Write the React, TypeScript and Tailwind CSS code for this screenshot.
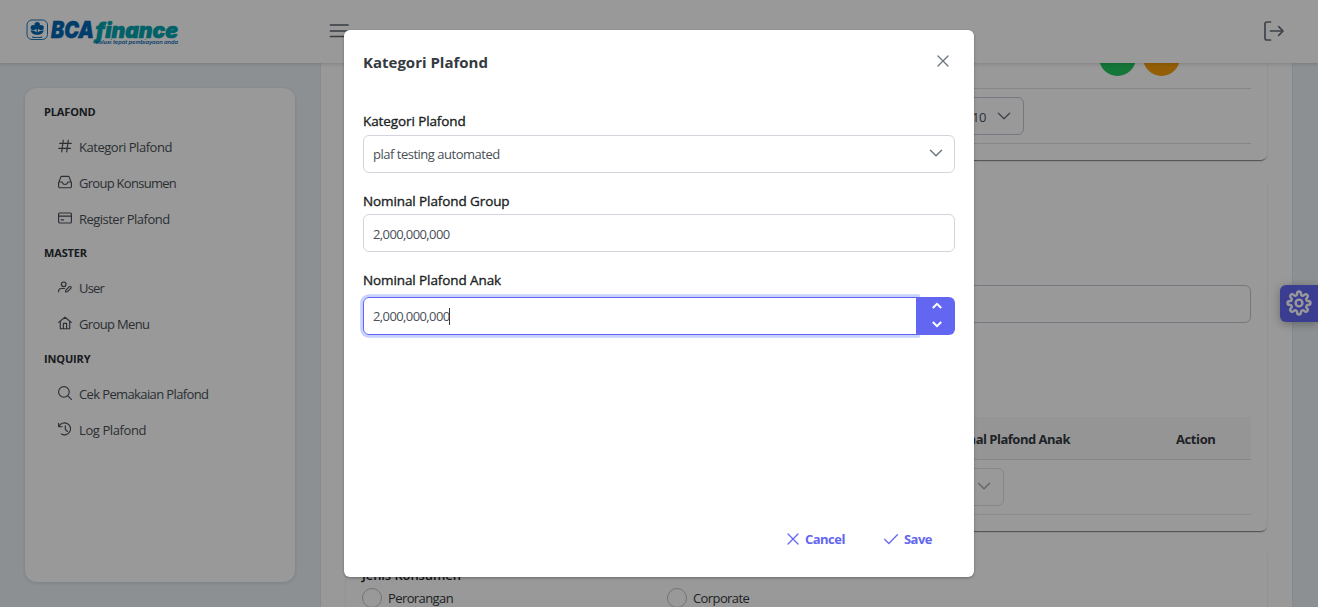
import React from "react";

type Kids = { children: React.ReactNode };

function Icon({ children, className = "size-3.5" }: Kids & { className?: string }) {
  return (
    <svg viewBox="0 0 14 14" fill="none" stroke="currentColor" strokeWidth="1.15" strokeLinecap="round" strokeLinejoin="round" className={`shrink-0 ${className}`}>
      {children}
    </svg>
  );
}

const hashtag = <path d="M5.3 1.2 3.7 12.8M10.3 1.2 8.7 12.8M1.7 4.3h11.6M.8 9.4h11.6" />;
const inbox = <path d="M.6 7.6 2.8 2.1Q3.1 1.4 3.9 1.4h6.2q.8 0 1.1.7l2.2 5.5v4.2q0 .9-.9.9H1.5q-.9 0-.9-.9ZM.8 7h2.9q.6 0 .7.6.5 1.9 2.6 1.9t2.6-1.9q.1-.6.7-.6h2.9" />;
const card = (
  <>
    <rect x=".6" y="2" width="12.8" height="10" rx="1" />
    <path d="M.6 5.2h12.8M3.2 8.8h2.3" strokeWidth="1.3" />
  </>
);
const userEdit = <path d="M5.700 6.600a2.300 2.300 0 1 0 0-4.600 2.300 2.300 0 0 0 0 4.600ZM.6 11.800V11q.2-2.500 2.700-2.500h3.200M7.600 11.900l.2-1.800 3.600-3.500q.6-.5 1.200 0l.4.4q.5.6 0 1.200l-3.600 3.500Z" />;
const home = <path d="M.7 6.4 7 1.2l6.3 5.2M2.3 5.3v7.4h9.400V5.3M5.4 12.7V7.4h3.2v5.3" />;
const search = <path d="M5.9 11.2A5.3 5.3 0 1 0 5.9.6a5.3 5.3 0 0 0 0 10.6ZM9.8 9.8l3.6 3.6" />;
const history = <path d="M.6 1.2v3.5h3.5M1 4.4A6 6 0 1 1 3.4 12M7.3 3.8v3.5l2.2 2.2" />;
const down = <path d="m1.4 4.2 5.6 5.6 5.6-5.6" />;

function Section({ title, children, className }: Kids & { title: string; className: string }) {
  return (
    <section>
      <h2 className={`pl-[19px] text-[11px] leading-[16px] font-bold tracking-[-0.15px] text-[#2a2d33] ${className}`}>{title}</h2>
      <ul>{children}</ul>
    </section>
  );
}

function Item({ icon, children, className }: Kids & { icon: React.ReactNode; className: string }) {
  return (
    <li className="flex h-9 items-center pl-[33px] text-[#495057]">
      <Icon className="mb-[3px] size-3.5">{icon}</Icon>
      <span className={`ml-[7px] pt-[2px] text-[13px] ${className}`}>{children}</span>
    </li>
  );
}

function Logo() {
  return (
    <svg width="156" height="32" viewBox="0 0 156 32" className="shrink-0 overflow-visible">
      <rect x="2" y="4" width="20.500" height="19.500" rx="5" fill="none" stroke="#0066b3" strokeWidth=".9" />
      <g fill="#0066b3">
        <circle cx="12.200" cy="8.600" r="2.700" />
        <circle cx="8.300" cy="11.600" r="2.700" />
        <circle cx="16.100" cy="11.600" r="2.700" />
        <circle cx="12.200" cy="11.600" r="2" />
        <path d="M11.600 10h1.200v6.200q2.300-2.200 6-1.700-1.200 3.700-5 4.300h-3.200q-3.800-.6-5-4.300 3.700-.5 6 1.700Z" />
        <path d="M7 20.600q5.200 1.200 10.400 0v.8q-5.200 1.200-10.400 0Z" />
      </g>
      <g fontFamily="Inter, sans-serif" fontStyle="italic" fontWeight="900">
        <text x="26" y="22" fontSize="22.500" fill="#0066b3" stroke="#0066b3" strokeWidth=".5" textLength="43" lengthAdjust="spacingAndGlyphs">BCA</text>
        <text x="70.500" y="22" fontSize="21" fill="#00a3ad" stroke="#00a3ad" strokeWidth=".7" textLength="82.500" lengthAdjust="spacingAndGlyphs">finance</text>
        <text x="70.500" y="28.400" fontSize="5.200" fontWeight="600" fill="#0066b3" textLength="82.500" lengthAdjust="spacingAndGlyphs">solusi tepat pembiayaan anda</text>
      </g>
    </svg>
  );
}

function Panel({ children, className }: Kids & { className: string }) {
  return <div className={`mx-[25px] shrink-0 rounded-md px-4 shadow-[0_2px_1px_-1px_rgba(0,0,0,0.4),0_1px_2px_rgba(0,0,0,0.14)] ${className}`}>{children}</div>;
}

function Radio({ label, className }: { label: string; className: string }) {
  return (
    <label className="flex w-[305px] items-center">
      <span className="size-5 rounded-full border border-[#bcc0c6]" />
      <span className={`ml-1.5 text-[13px] leading-5 text-[#343a40] ${className}`}>{label}</span>
    </label>
  );
}

function Page() {
  return (
    <div className="flex h-full flex-col bg-[#ebf1f6]">
      <header className="relative flex h-[63px] shrink-0 items-center bg-white pr-[33px] pl-[25px] shadow-[0_1px_4px_rgba(0,0,0,0.16)]">
        <Logo />
        <svg width="20" height="14" viewBox="0 0 20 14" stroke="#5c6570" strokeWidth="1.700" strokeLinecap="round" className="mb-px ml-[148px] overflow-visible">
          <path d="M1.500 1h17.500M1.500 7h17.500M1.500 12.500h17.500" />
        </svg>
        <svg width="22" height="20" viewBox="0 0 22 20" fill="none" stroke="#66707c" strokeWidth="1.700" strokeLinecap="round" strokeLinejoin="round" className="mb-0.5 ml-auto">
          <path d="M7.500 1H4Q2 1 2 3v14q0 2 2 2h3.500M7.500 10H20M15.700 5.600 20 10l-4.300 4.400" />
        </svg>
      </header>
      <div className="flex min-h-0 flex-1">
        <aside className="w-[320px] shrink-0 pt-[25px] pl-[25px]">
          <nav className="h-[494px] w-[270px] rounded-xl bg-white pt-4 shadow-[0_1px_4px_rgba(0,0,0,0.12)]">
            <Section title="PLAFOND" className="mb-[9px]">
              <Item icon={hashtag} className="tracking-[-0.47px]">Kategori Plafond</Item>
              <Item icon={inbox} className="tracking-[-0.72px]">Group Konsumen</Item>
              <Item icon={card} className="tracking-[-0.52px]">Register Plafond</Item>
            </Section>
            <Section title="MASTER" className="mt-2 mb-[9px]">
              <Item icon={userEdit} className="tracking-[-0.8px]">User</Item>
              <Item icon={home} className="tracking-[-0.65px]">Group Menu</Item>
            </Section>
            <Section title="INQUIRY" className="mt-[9px] mb-[9px]">
              <Item icon={search} className="tracking-[-0.62px]">Cek Pemakaian Plafond</Item>
              <Item icon={history} className="tracking-[-0.4px]">Log Plafond</Item>
            </Section>
          </nav>
        </aside>
        <main className="flex w-[973px] shrink-0 flex-col overflow-hidden border-x border-[#dfe7ef] bg-white">
          <Panel className="-mt-5 h-[117px]">
            <div className="flex h-[46px] items-start justify-end gap-[7px] border-b border-[#dcdfe3] pr-[71px]">
              <span className="-mt-[4px] size-[37px] rounded-full bg-[#22c55e]" />
              <span className="-mt-[4px] size-[37px] rounded-full bg-[#f59e0b]" />
            </div>
            <div className="flex h-[55px] items-center border-b border-[#dcdfe3] pl-[584px]">
              <div className="flex h-[38px] w-[78px] items-center rounded-md border border-[#c3c8d2] pl-[25px] text-[13px] tracking-[-0.5px] text-[#495057]">
                <span className="pt-1">10</span>
                <Icon className="mb-px ml-[11px] size-3.5 stroke-[1.4] text-[#6c757d]">{down}</Icon>
              </div>
            </div>
          </Panel>
          <Panel className="mt-[18px] h-[353px] pt-[107px]">
            <div className="h-[38px] rounded-md border border-[#c3c8d2]" />
            <div className="mt-[94px] flex h-[43px] items-center border-b border-[#dcdfe3] bg-[#f9f9fa] pt-[3px] text-[13px] font-bold text-[#343a40]">
              <span className="ml-[560px] w-[148px] text-right tracking-[-0.5px] whitespace-nowrap">Nominal Plafond Anak</span>
              <span className="ml-[106px] tracking-[-0.4px]">Action</span>
            </div>
            <div className="flex h-[55px] items-center border-b border-[#e7e9ec]">
              <div className="ml-[564px] flex h-[38px] w-[78px] items-center justify-end rounded-md border border-[#dcdfe6] pr-3 text-[#a0a6ad]">
                <Icon className="mb-0.5 size-3.5 stroke-[1.3]">{down}</Icon>
              </div>
            </div>
          </Panel>
          <Panel className="mt-[18px] h-[120px] pt-4">
            <p className="text-[13px] leading-5 font-semibold tracking-[-0.1px] text-[#212529]">Jenis Konsumen</p>
            <div className="mt-[3px] flex">
              <Radio label="Perorangan" className="tracking-[-0.6px]" />
              <Radio label="Corporate" className="tracking-[-0.6px]" />
            </div>
          </Panel>
        </main>
      </div>
    </div>
  );
}

function FieldLabel({ children, className }: Kids & { className: string }) {
  return <p className={`text-[13.5px] leading-5 tracking-[-0.1px] text-[#1b1f24] [-webkit-text-stroke:0.35px_#1b1f24] ${className}`}>{children}</p>;
}

function Dialog() {
  return (
    <div className="flex h-[547px] w-[630px] flex-col rounded-md bg-white px-[19px] shadow-[0_1px_3px_rgba(0,0,0,0.3)]">
      <div className="flex h-[65px] items-center justify-between pr-[5px]">
        <h1 className="text-[15px] font-bold text-[#343a40]">Kategori Plafond</h1>
        <Icon className="mb-[3px] size-3.5 text-[#6c757d]"><path d="m2 2 10 10M12 2 2 12" strokeWidth="1.3" /></Icon>
      </div>
      <FieldLabel className="mt-4 h-[24px]">Kategori Plafond</FieldLabel>
      <div className="flex h-[38px] items-center justify-between rounded-md border border-[#d1d5db] pr-[11px] pl-[9px] text-[#495057]">
        <span className="pt-[2px] text-[13px] tracking-[-0.49px]">plaf testing automated</span>
        <Icon className="mb-[3px] size-3.5 stroke-[1.4] text-[#6c757d]">{down}</Icon>
      </div>
      <FieldLabel className="mt-[18px] h-[23px]">Nominal Plafond Group</FieldLabel>
      <div className="flex h-[38px] items-center rounded-md border border-[#d1d5db] pl-[9px] text-[13px] tracking-[-0.6px] text-[#495057]">
        <span className="pt-[3px]">2,000,000,000</span>
      </div>
      <FieldLabel className="mt-[18px] h-[27px]">Nominal Plafond Anak</FieldLabel>
      <div className="flex h-[38px]">
        <div className="flex w-[554px] items-center rounded-l-md border border-[#6366f1] pl-[9px] text-[13px] tracking-[-0.6px] text-[#495057] shadow-[0_0_0_2.8px_#c7d2fe]">
          <span className="pt-[2px]">2,000,000,000</span>
          <span className="-ml-px h-[17px] w-px bg-[#343a40]" />
        </div>
        <div className="relative -ml-px flex w-[39px] flex-col items-center justify-between rounded-r-md bg-[#6366f1] pt-[3px] pb-[5px] pl-0.5 text-white">
          <svg width="10" height="12" viewBox="0 0 10 12" fill="none" stroke="currentColor" strokeWidth="2"><path d="m.8 8 4.200-4.200L9.200 8" /></svg>
          <svg width="10" height="12" viewBox="0 0 10 12" fill="none" stroke="currentColor" strokeWidth="2"><path d="m.8 4 4.200 4.200L9.200 4" /></svg>
        </div>
      </div>
      <div className="mt-auto mb-[27px] flex h-5 items-center justify-end pr-[23px] text-[13px] font-bold text-[#6366f1]">
        <Icon className="mb-[3px] size-3.5 stroke-[1.25]"><path d="m2 2 10 10M12 2 2 12" /></Icon>
        <span className="mr-[39px] ml-[5px] tracking-[-0.5px]">Cancel</span>
        <Icon className="mb-[3px] size-3.5 stroke-[1.25]"><path d="m.6 7.300 4.200 4.200L13.400 2.700" /></Icon>
        <span className="ml-1.5 tracking-[-0.5px]">Save</span>
      </div>
    </div>
  );
}

export default function App() {
  return (
    <div className="relative h-[607px] w-[1318px] overflow-hidden font-['Open_Sans',sans-serif]">
      <Page />
      <button className="absolute top-[285px] right-0 flex h-[37px] w-[38px] items-center justify-center rounded-l-md bg-[#6366f1] text-white shadow-[0_2px_10px_rgba(0,0,0,0.3)]">
        <svg width="26" height="26" viewBox="0 0 26 26" fill="none" stroke="currentColor" strokeWidth="2.400" strokeLinejoin="round" className="mb-0.5">
          <path d="M11 4.200Q11 1.500 13 1.500t2 2.700q0 1.300 1.200 1.500 1 .2 1.700-.5Q19.700 3.300 21.200 4.800t-.5 3.300q-.8.800-.4 1.700.5 1.200 1.500 1.200 2.700 0 2.700 2t-2.700 2q-1.100 0-1.500 1.200-.4 1 .4 1.700 1.900 1.800.5 3.300t-3.300-.5q-.7-.7-1.700-.4-1.200.4-1.200 1.500 0 2.700-2 2.700t-2-2.700q0-1.100-1.200-1.500-1-.3-1.700.4-1.800 2-3.300.5t.5-3.300q.7-.8.400-1.700-.4-1.200-1.500-1.200-2.700 0-2.700-2t2.700-2q1.100 0 1.500-1.200.300-.9-.4-1.700Q3.300 6.300 4.800 4.800t3.300.5q.8.700 1.700.4Q11 5.400 11 4.200Z" />
          <circle cx="13" cy="13" r="3.400" />
        </svg>
      </button>
      <div className="absolute inset-0 flex items-center justify-center bg-black/40">
        <Dialog />
      </div>
    </div>
  );
}
